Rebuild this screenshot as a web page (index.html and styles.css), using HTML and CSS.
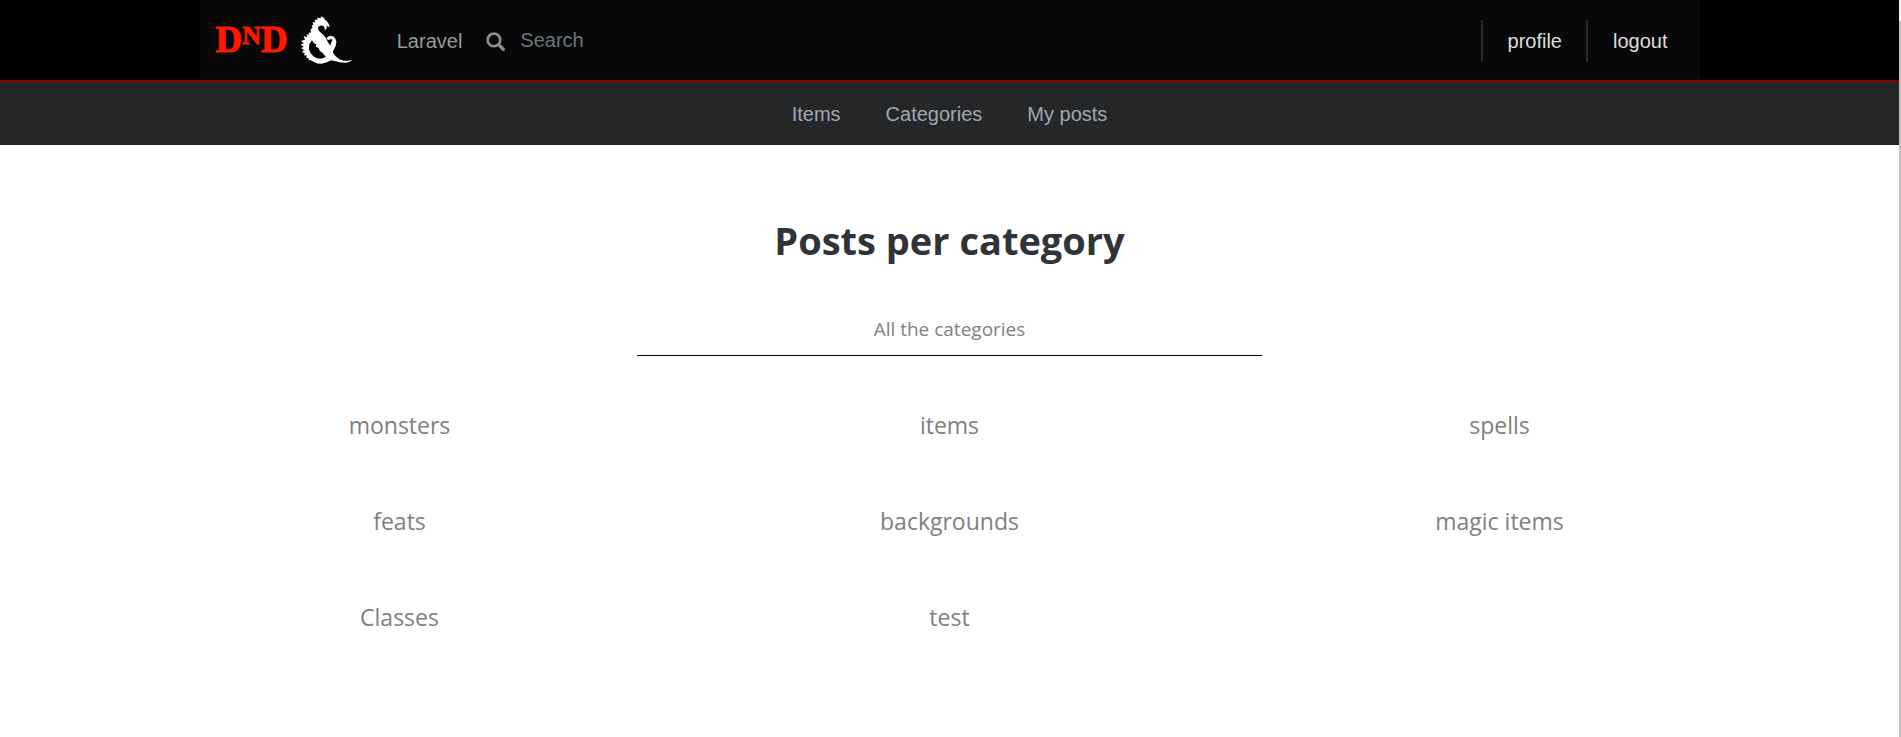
FILE: index.html
```html
<!DOCTYPE html>
<html lang="en">
<head>
<meta charset="utf-8">
<title>Posts per category</title>
<link rel="stylesheet" href="styles.css">
</head>
<body>
<div class="page">
  <header class="topbar">
    <div class="topbar-inner">
      <a class="logo" href="#" aria-label="DND home">
        <span class="logo-text">D<span class="logo-small">N</span>D</span>
        <svg class="dragon" viewBox="330 45 160 150" aria-hidden="true">
          <path fill="#fff" fill-rule="evenodd" d="M362 88 L368 82 L365 76 L371 73 L368 67 L376 66 L374 59 L383 59 L382 53 L391 54 L396 48 L400 53 L405 53 L403 57 L409 61 L417 72 L420 81 L414 79 L410 77 L411 84 L405 91 L404 83 L400 77 L393 76 L386 79 L384 85 L387 92 L393 98 L401 105 L408 114 L414 126 L421 137 L424 128 L428 120 L424 117 L416 120 L410 116 L414 110 L421 107 L430 109 L436 115 L440 125 L438 137 L431 151 L429 158 L437 168 L449 178 L462 183 L475 183 L488 180 L480 186 L470 189 L454 188 L438 184 L424 181 L411 187 L396 192 L382 191 L371 186 L361 180 L356 181 L357 175 L349 174 L351 167 L342 166 L345 160 L336 157 L342 150 L334 145 L341 140 L332 133 L342 130 L333 123 L345 119 L341 108 L352 112 L350 103 L358 104 L356 97 L363 98 Z M366 121 L358 133 L357 148 L362 160 L371 170 L383 176 L396 176 L408 171 L399 160 L390 153 L386 144 L378 140 L379 133 L372 130 Z"/>
        </svg>
      </a>
      <a class="brand" href="#">Laravel</a>
      <form class="search" role="search">
        <svg class="search-icon" viewBox="0 0 18 18" aria-hidden="true"><circle cx="7.5" cy="7.5" r="6" fill="none" stroke="currentColor" stroke-width="2.6"/><path d="M12 12 L16.3 16.3" stroke="currentColor" stroke-width="3.2" stroke-linecap="round"/></svg>
        <input class="search-input" type="search" placeholder="Search" aria-label="Search">
      </form>
      <div class="account">
        <a class="account-link" href="#">profile</a>
        <a class="account-link" href="#">logout</a>
      </div>
    </div>
  </header>
  <nav class="subnav">
    <a href="#">Items</a>
    <a href="#">Categories</a>
    <a href="#">My posts</a>
  </nav>
  <main class="content">
    <h1 class="title">Posts per category</h1>
    <p class="subtitle">All the categories</p>
    <div class="categories">
      <a href="#">monsters</a>
      <a href="#">items</a>
      <a href="#">spells</a>
      <a href="#">feats</a>
      <a href="#">backgrounds</a>
      <a href="#">magic items</a>
      <a href="#">Classes</a>
      <a href="#">test</a>
    </div>
  </main>
</div>
<div class="scroll-track"></div>
</body>
</html>
```
FILE: styles.css
```css
* { box-sizing: border-box; }
body {
  margin: 0;
  min-height: 100vh;
  display: grid;
  grid-template-columns: minmax(0, 1fr) 2px;
  background: #fff;
  font-family: "Open Sans", "Noto Sans", sans-serif;
}
a { color: inherit; text-decoration: none; }
.scroll-track {
  background: #c1c1c1;
  border-top: 21px solid #f1f1f1;
}
.topbar {
  background: #000;
  border-bottom: 2px solid #8b0000;
  font: 20px/24px "Liberation Sans", Arial, sans-serif;
}
.topbar-inner {
  max-width: 1500px;
  height: 80px;
  margin: 0 auto;
  padding: 0 12px 0 16px;
  display: flex;
  align-items: center;
  background: #080808;
}
.logo { display: flex; align-items: center; gap: 12px; }
.logo-text {
  display: flex;
  align-items: flex-start;
  color: #ff1800;
  font: bold 37px/48px "Liberation Serif", serif;
  -webkit-text-stroke: 1px #ff1800;
}
.logo-small { font-size: 26px; line-height: 40px; }
.dragon { width: 53px; height: 50px; }
.brand { margin-left: 44px; padding-top: 2px; color: #999; }
.search { display: flex; align-items: center; gap: 15px; margin-left: 24px; color: #8c8c8c; }
.search-icon { width: 19px; height: 19px; margin-top: 2px; }
.search-input {
  width: 200px;
  padding: 0;
  border: 0;
  outline: 0;
  background: transparent;
  color: #999;
  font: inherit;
}
.search-input::placeholder { color: #6c757d; opacity: 1; }
.account { display: flex; margin-left: auto; padding-top: 2px; color: #ddd; }
.account-link { padding: 9px 24px 9px 25px; border-left: 2px solid #292929; }
.account-link:last-child { padding-right: 20px; }
.subnav {
  display: flex;
  justify-content: center;
  gap: 45px;
  padding: 20px 0 18px;
  border-bottom: 1px solid #1d1f21;
  background: #242628;
  color: #a0a8b0;
  font: 20px/24px "Liberation Sans", Arial, sans-serif;
}
.content {
  max-width: 1650px;
  margin: 0 auto;
  padding: 71px 0 40px;
  text-align: center;
  color: #808080;
}
.title { margin: 0; font-size: 38px; line-height: 48px; color: #303438; }
.subtitle {
  max-width: 625px;
  margin: 50px auto 0;
  padding-bottom: 11px;
  border-bottom: 1px solid #000;
  font-size: 19px;
  line-height: 30px;
}
.categories {
  display: grid;
  grid-template-columns: repeat(3, 1fr);
  row-gap: 60px;
  margin-top: 51px;
  font-size: 23px;
  line-height: 36px;
}
```
